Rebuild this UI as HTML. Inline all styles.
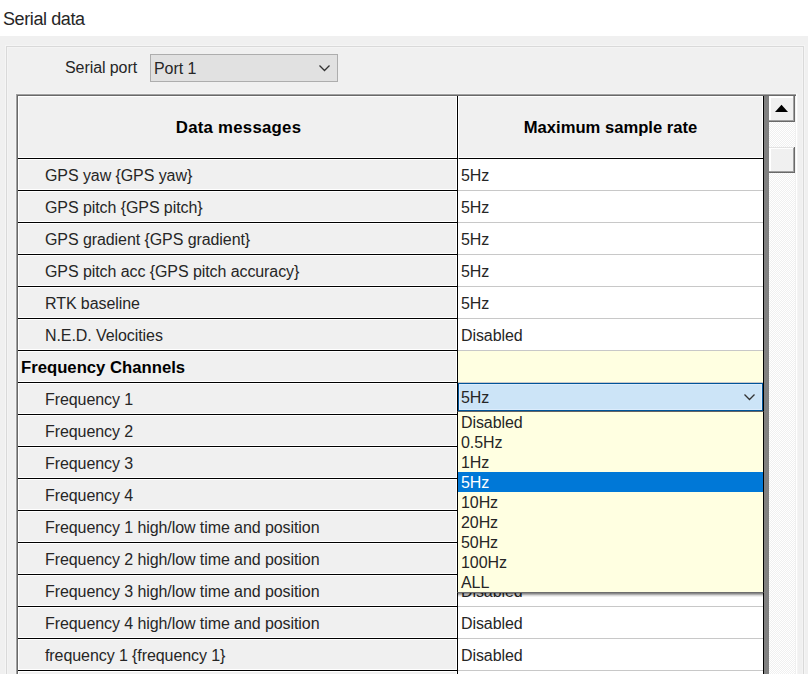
<!DOCTYPE html><html><head><meta charset="utf-8"><style>
*{margin:0;padding:0;box-sizing:border-box}
html,body{width:808px;height:674px;overflow:hidden;background:#f0f0f0;font-family:"Liberation Sans",sans-serif;color:#000}
.a{position:absolute}
.t{position:absolute;white-space:nowrap;font-size:16px;line-height:20px;letter-spacing:-0.08px}
.t{color:#262626}
.b{letter-spacing:0;color:#000}
.b{font-weight:bold}
</style></head><body><div class="a" style="left:0;top:0;width:808px;height:36px;background:#fff"></div>
<div class="t" style="left:3px;top:8.7px;font-size:18px;letter-spacing:-0.4px">Serial data</div>
<div class="a" style="left:5px;top:45px;width:800px;height:700px;border:1px solid #f5f5f5"></div>
<div class="a" style="left:6px;top:46px;width:798px;height:700px;border:1px solid #d9d9d9"></div>
<div class="a" style="left:7px;top:47px;width:796px;height:700px;border:1px solid #f4f4f4"></div>
<div class="t" style="left:65px;top:58px">Serial port</div>
<div class="a" style="left:150px;top:54px;width:188px;height:28px;background:#e1e1e1;border:1px solid #adadad"></div>
<div class="t" style="left:154px;top:59px">Port 1</div>
<svg class="a" style="left:318px;top:64px" width="14" height="9" viewBox="0 0 14 9"><path d="M1.5 1.5 L6.5 6.5 L11.5 1.5" fill="none" stroke="#333" stroke-width="1.3"/></svg>
<div class="a" style="left:15px;top:93px;width:783px;height:600px;background:#f4f4f4"></div>
<div class="a" style="left:16px;top:94px;width:781px;height:600px;background:#a0a0a0"></div>
<div class="a" style="left:17px;top:95px;width:780px;height:600px;background:#696969"></div>
<div class="a" style="left:796px;top:94px;width:1px;height:600px;background:#fff"></div>
<div class="a" style="left:18px;top:96px;width:778px;height:600px;background:#808080"></div>
<div class="a" style="left:18px;top:96px;width:439px;height:62px;background:#f0f0f0;border:1px solid #fff"></div>
<div class="a" style="left:458px;top:96px;width:305px;height:62px;background:#f0f0f0;border:1px solid #fff"></div>
<div class="a" style="left:457px;top:96px;width:1px;height:600px;background:#000"></div>
<div class="a" style="left:763px;top:96px;width:1px;height:600px;background:#000"></div>
<div class="a" style="left:18px;top:158px;width:440px;height:1px;background:#000"></div><div class="a" style="left:459px;top:158px;width:304px;height:1px;background:#000"></div>
<div class="t b" style="left:19px;top:118px;width:439px;text-align:center;font-size:16.8px;letter-spacing:0.25px">Data messages</div>
<div class="t b" style="left:458px;top:118px;width:305px;text-align:center;font-size:16.6px">Maximum sample rate</div>
<div class="a" style="left:18px;top:159px;width:439px;height:31px;background:#f0f0f0;border:1px solid #fff"></div>
<div class="a" style="left:18px;top:190px;width:439px;height:1px;background:#000"></div>
<div class="a" style="left:458px;top:159px;width:305px;height:31px;background:#fff"></div>
<div class="a" style="left:458px;top:190px;width:305px;height:1px;background:#c8c8c8"></div>
<div class="t" style="left:45px;top:166px">GPS yaw {GPS yaw}</div>
<div class="t" style="left:461px;top:166px">5Hz</div>
<div class="a" style="left:18px;top:191px;width:439px;height:31px;background:#f0f0f0;border:1px solid #fff"></div>
<div class="a" style="left:18px;top:222px;width:439px;height:1px;background:#000"></div>
<div class="a" style="left:458px;top:191px;width:305px;height:31px;background:#fff"></div>
<div class="a" style="left:458px;top:222px;width:305px;height:1px;background:#c8c8c8"></div>
<div class="t" style="left:45px;top:198px">GPS pitch {GPS pitch}</div>
<div class="t" style="left:461px;top:198px">5Hz</div>
<div class="a" style="left:18px;top:223px;width:439px;height:31px;background:#f0f0f0;border:1px solid #fff"></div>
<div class="a" style="left:18px;top:254px;width:439px;height:1px;background:#000"></div>
<div class="a" style="left:458px;top:223px;width:305px;height:31px;background:#fff"></div>
<div class="a" style="left:458px;top:254px;width:305px;height:1px;background:#c8c8c8"></div>
<div class="t" style="left:45px;top:230px">GPS gradient {GPS gradient}</div>
<div class="t" style="left:461px;top:230px">5Hz</div>
<div class="a" style="left:18px;top:255px;width:439px;height:31px;background:#f0f0f0;border:1px solid #fff"></div>
<div class="a" style="left:18px;top:286px;width:439px;height:1px;background:#000"></div>
<div class="a" style="left:458px;top:255px;width:305px;height:31px;background:#fff"></div>
<div class="a" style="left:458px;top:286px;width:305px;height:1px;background:#c8c8c8"></div>
<div class="t" style="left:45px;top:262px">GPS pitch acc {GPS pitch accuracy}</div>
<div class="t" style="left:461px;top:262px">5Hz</div>
<div class="a" style="left:18px;top:287px;width:439px;height:31px;background:#f0f0f0;border:1px solid #fff"></div>
<div class="a" style="left:18px;top:318px;width:439px;height:1px;background:#000"></div>
<div class="a" style="left:458px;top:287px;width:305px;height:31px;background:#fff"></div>
<div class="a" style="left:458px;top:318px;width:305px;height:1px;background:#c8c8c8"></div>
<div class="t" style="left:45px;top:294px">RTK baseline</div>
<div class="t" style="left:461px;top:294px">5Hz</div>
<div class="a" style="left:18px;top:319px;width:439px;height:31px;background:#f0f0f0;border:1px solid #fff"></div>
<div class="a" style="left:18px;top:350px;width:439px;height:1px;background:#000"></div>
<div class="a" style="left:458px;top:319px;width:305px;height:31px;background:#fff"></div>
<div class="a" style="left:458px;top:350px;width:305px;height:1px;background:#c8c8c8"></div>
<div class="t" style="left:45px;top:326px">N.E.D. Velocities</div>
<div class="t" style="left:461px;top:326px">Disabled</div>
<div class="a" style="left:18px;top:351px;width:439px;height:31px;background:#f0f0f0;border:1px solid #fff"></div>
<div class="a" style="left:18px;top:382px;width:439px;height:1px;background:#000"></div>
<div class="a" style="left:458px;top:351px;width:305px;height:31px;background:#ffffe1"></div>
<div class="a" style="left:458px;top:382px;width:305px;height:1px;background:#c8c8c8"></div>
<div class="t b" style="left:21px;top:358px;font-size:16.7px">Frequency Channels</div>
<div class="a" style="left:18px;top:383px;width:439px;height:31px;background:#f0f0f0;border:1px solid #fff"></div>
<div class="a" style="left:18px;top:414px;width:439px;height:1px;background:#000"></div>
<div class="a" style="left:458px;top:383px;width:305px;height:31px;background:#fff"></div>
<div class="a" style="left:458px;top:414px;width:305px;height:1px;background:#c8c8c8"></div>
<div class="t" style="left:45px;top:390px">Frequency 1</div>
<div class="a" style="left:18px;top:415px;width:439px;height:31px;background:#f0f0f0;border:1px solid #fff"></div>
<div class="a" style="left:18px;top:446px;width:439px;height:1px;background:#000"></div>
<div class="a" style="left:458px;top:415px;width:305px;height:31px;background:#fff"></div>
<div class="a" style="left:458px;top:446px;width:305px;height:1px;background:#c8c8c8"></div>
<div class="t" style="left:45px;top:422px">Frequency 2</div>
<div class="t" style="left:461px;top:422px">Disabled</div>
<div class="a" style="left:18px;top:447px;width:439px;height:31px;background:#f0f0f0;border:1px solid #fff"></div>
<div class="a" style="left:18px;top:478px;width:439px;height:1px;background:#000"></div>
<div class="a" style="left:458px;top:447px;width:305px;height:31px;background:#fff"></div>
<div class="a" style="left:458px;top:478px;width:305px;height:1px;background:#c8c8c8"></div>
<div class="t" style="left:45px;top:454px">Frequency 3</div>
<div class="t" style="left:461px;top:454px">Disabled</div>
<div class="a" style="left:18px;top:479px;width:439px;height:31px;background:#f0f0f0;border:1px solid #fff"></div>
<div class="a" style="left:18px;top:510px;width:439px;height:1px;background:#000"></div>
<div class="a" style="left:458px;top:479px;width:305px;height:31px;background:#fff"></div>
<div class="a" style="left:458px;top:510px;width:305px;height:1px;background:#c8c8c8"></div>
<div class="t" style="left:45px;top:486px">Frequency 4</div>
<div class="t" style="left:461px;top:486px">Disabled</div>
<div class="a" style="left:18px;top:511px;width:439px;height:31px;background:#f0f0f0;border:1px solid #fff"></div>
<div class="a" style="left:18px;top:542px;width:439px;height:1px;background:#000"></div>
<div class="a" style="left:458px;top:511px;width:305px;height:31px;background:#fff"></div>
<div class="a" style="left:458px;top:542px;width:305px;height:1px;background:#c8c8c8"></div>
<div class="t" style="left:45px;top:518px">Frequency 1 high/low time and position</div>
<div class="t" style="left:461px;top:518px">Disabled</div>
<div class="a" style="left:18px;top:543px;width:439px;height:31px;background:#f0f0f0;border:1px solid #fff"></div>
<div class="a" style="left:18px;top:574px;width:439px;height:1px;background:#000"></div>
<div class="a" style="left:458px;top:543px;width:305px;height:31px;background:#fff"></div>
<div class="a" style="left:458px;top:574px;width:305px;height:1px;background:#c8c8c8"></div>
<div class="t" style="left:45px;top:550px">Frequency 2 high/low time and position</div>
<div class="t" style="left:461px;top:550px">Disabled</div>
<div class="a" style="left:18px;top:575px;width:439px;height:31px;background:#f0f0f0;border:1px solid #fff"></div>
<div class="a" style="left:18px;top:606px;width:439px;height:1px;background:#000"></div>
<div class="a" style="left:458px;top:575px;width:305px;height:31px;background:#fff"></div>
<div class="a" style="left:458px;top:606px;width:305px;height:1px;background:#c8c8c8"></div>
<div class="t" style="left:45px;top:582px">Frequency 3 high/low time and position</div>
<div class="t" style="left:461px;top:582px">Disabled</div>
<div class="a" style="left:18px;top:607px;width:439px;height:31px;background:#f0f0f0;border:1px solid #fff"></div>
<div class="a" style="left:18px;top:638px;width:439px;height:1px;background:#000"></div>
<div class="a" style="left:458px;top:607px;width:305px;height:31px;background:#fff"></div>
<div class="a" style="left:458px;top:638px;width:305px;height:1px;background:#c8c8c8"></div>
<div class="t" style="left:45px;top:614px">Frequency 4 high/low time and position</div>
<div class="t" style="left:461px;top:614px">Disabled</div>
<div class="a" style="left:18px;top:639px;width:439px;height:31px;background:#f0f0f0;border:1px solid #fff"></div>
<div class="a" style="left:18px;top:670px;width:439px;height:1px;background:#000"></div>
<div class="a" style="left:458px;top:639px;width:305px;height:31px;background:#fff"></div>
<div class="a" style="left:458px;top:670px;width:305px;height:1px;background:#c8c8c8"></div>
<div class="t" style="left:45px;top:646px">frequency 1 {frequency 1}</div>
<div class="t" style="left:461px;top:646px">Disabled</div>
<div class="a" style="left:18px;top:671px;width:439px;height:31px;background:#f0f0f0;border:1px solid #fff"></div>
<div class="a" style="left:18px;top:702px;width:439px;height:1px;background:#000"></div>
<div class="a" style="left:458px;top:671px;width:305px;height:31px;background:#fff"></div>
<div class="a" style="left:458px;top:702px;width:305px;height:1px;background:#c8c8c8"></div>
<div class="t" style="left:461px;top:678px">Disabled</div>
<div class="a" style="left:458px;top:383px;width:305px;height:28px;background:#cce4f7;border:1px solid #005499"></div>
<div class="a" style="left:459px;top:384px;width:303px;height:26px;border:1px solid #dcecfc"></div>
<div class="t" style="left:461px;top:388px">5Hz</div>
<svg class="a" style="left:743px;top:393px" width="14" height="9" viewBox="0 0 14 9"><path d="M1.5 1.5 L6.5 6.5 L11.5 1.5" fill="none" stroke="#333" stroke-width="1.3"/></svg>
<div class="a" style="left:457px;top:411px;width:307px;height:182px;background:#ffffe1;border:1px solid #000;border-top-color:#646464;border-bottom-color:#6e6e6e"></div>
<div class="a" style="left:458px;top:593px;width:305px;height:1px;background:rgba(0,0,0,0.46)"></div>
<div class="a" style="left:458px;top:594px;width:305px;height:1px;background:rgba(0,0,0,0.31)"></div>
<div class="a" style="left:458px;top:595px;width:305px;height:1px;background:rgba(0,0,0,0.15)"></div>
<div class="a" style="left:458px;top:596px;width:305px;height:1px;background:rgba(0,0,0,0.06)"></div>
<div class="t" style="left:461px;top:413px">Disabled</div>
<div class="t" style="left:461px;top:433px">0.5Hz</div>
<div class="t" style="left:461px;top:453px">1Hz</div>
<div class="a" style="left:458px;top:472px;width:305px;height:20px;background:#0078d7"></div>
<div class="t" style="left:461px;top:473px;color:#fff">5Hz</div>
<div class="t" style="left:461px;top:493px">10Hz</div>
<div class="t" style="left:461px;top:513px">20Hz</div>
<div class="t" style="left:461px;top:533px">50Hz</div>
<div class="t" style="left:461px;top:553px">100Hz</div>
<div class="t" style="left:461px;top:573px">ALL</div>
<div class="a" style="left:769px;top:96px;width:26px;height:600px;background-color:#f0f0f0;background-image:repeating-conic-gradient(#fff 0 25%,#f0f0f0 0 50%);background-size:2px 2px"></div>
<div class="a" style="left:769px;top:96px;width:26px;height:26px;background:#696969"></div><div class="a" style="left:769px;top:96px;width:25px;height:25px;background:#a0a0a0"></div><div class="a" style="left:769px;top:96px;width:24px;height:24px;background:#fff"></div><div class="a" style="left:771px;top:98px;width:22px;height:22px;background:#f0f0f0"></div>
<svg class="a" style="left:769px;top:96px" width="26" height="26" viewBox="0 0 26 26"><path d="M6 16 L19 16 L12.5 8.8 Z" fill="#000"/></svg>
<div class="a" style="left:769px;top:147px;width:26px;height:26px;background:#696969"></div><div class="a" style="left:769px;top:147px;width:25px;height:25px;background:#a0a0a0"></div><div class="a" style="left:769px;top:147px;width:24px;height:24px;background:#fff"></div><div class="a" style="left:771px;top:149px;width:22px;height:22px;background:#f0f0f0"></div>
<div class="a" style="left:769px;top:147px;width:25px;height:1px;background:#e3e3e3"></div>
<div class="a" style="left:795px;top:96px;width:1px;height:600px;background:#f0f0f0"></div></body></html>
